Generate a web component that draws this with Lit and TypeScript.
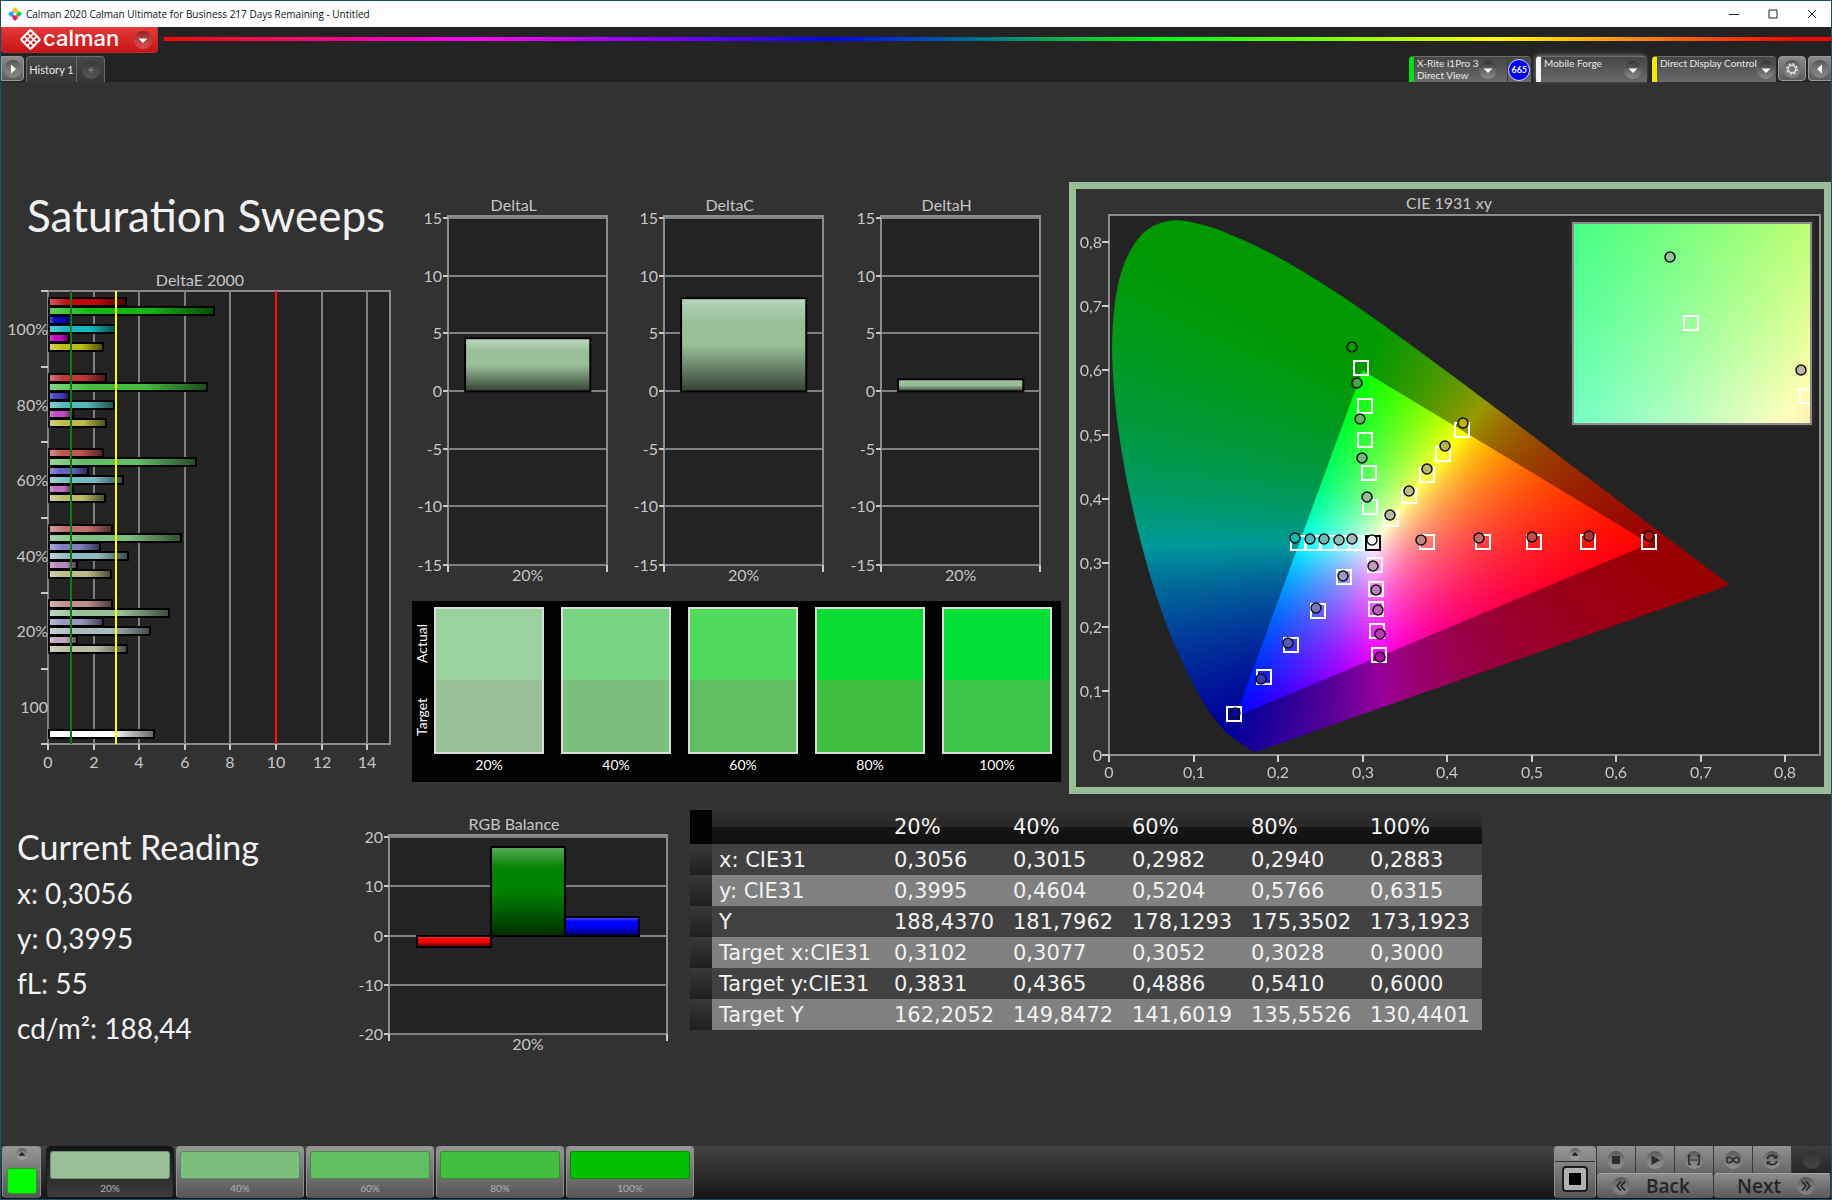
import { LitElement, html, svg, css } from "lit";
import { customElement, property } from "lit/decorators.js";

type Point = [number, number];

const chartText = css`
  :host {
    display: block;
  }
  svg {
    display: block;
    width: 100%;
    height: auto;
  }
  text {
    font-family: Lato, "Open Sans", sans-serif;
    font-size: 16px;
    fill: #c6c6c6;
  }
  .mid {
    text-anchor: middle;
  }
  .end {
    text-anchor: end;
  }
  .plot {
    fill: #232323;
    stroke: #8c8c8c;
    stroke-width: 2;
    shape-rendering: crispEdges;
  }
  .grid {
    stroke: #808080;
    stroke-width: 2;
    shape-rendering: crispEdges;
  }
  .tick {
    stroke: #c8c8c8;
    stroke-width: 2;
    shape-rendering: crispEdges;
  }
`;

/* ---------- vertical bar chart (DeltaL, DeltaC, DeltaH, RGB Balance) ---------- */

interface Bar {
  value: number;
  color: string;
}

@customElement("value-chart")
export class ValueChart extends LitElement {
  @property() heading = "";
  @property({ attribute: false }) bars: Bar[] = [];
  @property({ type: Number }) limit = 15;
  @property({ type: Number }) step = 5;
  @property({ type: Number }) boxWidth = 216;
  @property({ type: Number }) boxHeight = 418;
  @property({ type: Number }) plotLeft = 36;
  @property({ type: Number }) plotWidth = 159;
  @property({ type: Number }) plotHeight = 346;
  @property({ type: Number }) inset = 17;

  static styles = [
    chartText,
    css`
      .bar {
        stroke: #000;
        stroke-width: 2;
      }
    `,
  ];

  render() {
    const top = 36;
    const left = this.plotLeft;
    const right = left + this.plotWidth;
    const bottom = top + this.plotHeight;
    const y = (v: number) => Math.round(top + ((this.limit - v) / (2 * this.limit)) * this.plotHeight);
    const levels: number[] = [];
    for (let v = this.limit; v >= -this.limit; v -= this.step) levels.push(v);
    const barWidth = (this.plotWidth - 2 * this.inset) / this.bars.length;
    return html`
      <svg viewBox="0 0 ${this.boxWidth} ${this.boxHeight}" role="img" aria-label=${this.heading}>
        <defs>
          <linearGradient id="shade" x1="0" y1="0" x2="0" y2="1">
            <stop offset="0" stop-color="#fff" stop-opacity="0.35" />
            <stop offset="0.25" stop-color="#fff" stop-opacity="0" />
            <stop offset="0.5" stop-color="#000" stop-opacity="0" />
            <stop offset="1" stop-color="#000" stop-opacity="0.65" />
          </linearGradient>
        </defs>
        <text class="mid" x=${left + this.plotWidth / 2 - 14} y="29">${this.heading}</text>
        <rect class="plot" x=${left} y=${top - 2} width=${this.plotWidth} height=${this.plotHeight + 2} />
        ${levels.map(
          (v) => svg`
            <line class="grid" x1=${left} x2=${right} y1=${y(v)} y2=${y(v)} />
            <line class="tick" x1=${left - 5} x2=${left} y1=${y(v)} y2=${y(v)} />
            <text class="end" x=${left - 6} y=${y(v) + 6}>${v}</text>`
        )}
        <line class="tick" x1=${left} x2=${left} y1=${bottom} y2=${bottom + 7} />
        <line class="tick" x1=${right} x2=${right} y1=${bottom} y2=${bottom + 7} />
        ${this.bars.map((b, i) => {
          const x = left + this.inset + i * barWidth;
          const y0 = Math.min(y(0), y(b.value));
          const h = Math.abs(y(0) - y(b.value));
          return svg`
            <rect x=${x} y=${y0} width=${barWidth} height=${h} fill=${b.color} />
            <rect class="bar" x=${x} y=${y0} width=${barWidth} height=${h} fill="url(#shade)" />`;
        })}
        <text class="mid" x=${left + this.plotWidth / 2} y=${bottom + 16}>20%</text>
      </svg>
    `;
  }
}

/* ---------- horizontal bar chart (DeltaE 2000) ---------- */

const SWEEPS: { label: string; values: number[]; colors: string[] }[] = [
  {
    label: "100%",
    values: [3.4, 7.3, 1.0, 3.0, 0.9, 2.43],
    colors: ["#c00808", "#10b810", "#0a0ac0", "#10b8c0", "#c008c0", "#bcbc10"],
  },
  {
    label: "80%",
    values: [2.55, 6.96, 0.9, 2.9, 1.08, 2.55],
    colors: ["#c03838", "#44bc40", "#4444c0", "#50b8b8", "#c04cc0", "#bcbc44"],
  },
  {
    label: "60%",
    values: [2.43, 6.49, 1.74, 3.3, 1.08, 2.5],
    colors: ["#c05454", "#60bf60", "#6464c0", "#74bcc0", "#c070c0", "#bcbc68"],
  },
  {
    label: "40%",
    values: [2.8, 5.85, 2.27, 3.5, 1.29, 2.75],
    colors: ["#c07070", "#7cc07e", "#8080c0", "#90bcc0", "#c088c0", "#bcbc88"],
  },
  {
    label: "20%",
    values: [2.8, 5.3, 2.43, 4.47, 1.29, 3.48],
    colors: ["#c09090", "#99bf99", "#9898c0", "#a8bcc0", "#c0a4c0", "#bcbca0"],
  },
  { label: "100", values: [0, 0, 0, 0, 0, 0, 4.65], colors: ["", "", "", "", "", "", "#ffffff"] },
];

@customElement("sweep-chart")
export class SweepChart extends LitElement {
  static styles = [
    chartText,
    css`
      .bar {
        stroke: #000;
        stroke-width: 2;
      }
      .limit {
        stroke-width: 2;
        shape-rendering: crispEdges;
      }
      .good {
        stroke: #0c7a0c;
      }
      .fair {
        stroke: #ffff00;
      }
      .poor {
        stroke: #ff1010;
      }
    `,
  ];

  render() {
    const left = 47;
    const top = 29;
    const width = 342;
    const height = 453;
    const bottom = top + height;
    const x = (v: number) => Math.round(left + (v * width) / 15);
    const band = height / SWEEPS.length;
    const pitch = 9;
    const vline = (v: number, cls: string) =>
      svg`<line class="limit ${cls}" x1=${x(v)} x2=${x(v)} y1=${top} y2=${bottom} />`;
    return html`
      <svg viewBox="0 0 411 518" role="img" aria-label="DeltaE 2000">
        <defs>
          <linearGradient id="shade">
            <stop offset="0" stop-color="#fff" stop-opacity="0.35" />
            <stop offset="0.25" stop-color="#fff" stop-opacity="0" />
            <stop offset="0.6" stop-color="#000" stop-opacity="0" />
            <stop offset="1" stop-color="#000" stop-opacity="0.6" />
          </linearGradient>
        </defs>
        <text class="mid" x="199" y="24">DeltaE 2000</text>
        <rect class="plot" x=${left} y=${top} width=${width} height=${height} />
        ${[0, 2, 4, 6, 8, 10, 12, 14].map(
          (v) => svg`
            <line class="grid" x1=${x(v)} x2=${x(v)} y1=${top} y2=${bottom} />
            <line class="tick" x1=${x(v)} x2=${x(v)} y1=${bottom} y2=${bottom + 6} />
            <text class="mid" x=${x(v)} y=${bottom + 24}>${v}</text>`
        )}
        ${[0, 1, 2, 3, 4, 5, 6].map((i) => {
          const y = Math.round(top + i * band);
          return svg`<line class="tick" x1=${left - 7} x2=${left} y1=${y} y2=${y} />`;
        })}
        ${SWEEPS.map((s, i) => {
          const y = Math.round(top + i * band);
          return svg`
            <text class="end" x=${left} y=${y + 44}>${s.label}</text>
            ${s.values.map((v, k) =>
              v
                ? svg`
                    <rect x=${left + 1} y=${y + 7 + k * pitch} width=${x(v) - left - 1} height="8" fill=${s.colors[k]} />
                    <rect class="bar" x=${left + 1} y=${y + 7 + k * pitch} width=${x(v) - left - 1} height="8"
                      fill="url(#shade)" />`
                : null
            )}`;
        })}
        ${vline(1, "good")} ${vline(3, "fair")} ${vline(10, "poor")}
      </svg>
    `;
  }
}

/* ---------- CIE 1931 chromaticity diagram ---------- */

const LOCUS: Point[] = [
  [0.1741, 0.005], [0.1726, 0.0048], [0.1689, 0.0069], [0.1644, 0.0109], [0.1566, 0.0177],
  [0.144, 0.0297], [0.1355, 0.0399], [0.1241, 0.0578], [0.1096, 0.0868], [0.0913, 0.1327],
  [0.0687, 0.2007], [0.0454, 0.295], [0.0235, 0.4127], [0.0082, 0.5384], [0.0039, 0.6548],
  [0.0139, 0.7502], [0.0389, 0.812], [0.0743, 0.8338], [0.1142, 0.8262], [0.1547, 0.8059],
  [0.1929, 0.7816], [0.2296, 0.7543], [0.2658, 0.7243], [0.3016, 0.6923], [0.3373, 0.6589],
  [0.3731, 0.6245], [0.4087, 0.5896], [0.4441, 0.5547], [0.4788, 0.5202], [0.5125, 0.4866],
  [0.5448, 0.4544], [0.5752, 0.4242], [0.627, 0.3725], [0.6658, 0.334], [0.6915, 0.3083],
  [0.719, 0.2809], [0.7347, 0.2653],
];

const PRIMARIES: Point[] = [[0.64, 0.33], [0.3, 0.6], [0.15, 0.06]];

const PLOT_W = 711;
const PLOT_H = 540;
const UNIT_X = 845;
const UNIT_Y = 641;

/* Marker centres in plot pixels. */
const TARGETS: Point[] = [
  [252, 153], [256, 191], [256, 225], [260, 258], [261, 292],
  [353, 215], [334, 239], [318, 260], [300, 281], [282, 304],
  [189, 328], [204, 328], [219, 328], [234, 328], [248, 328],
  [318, 327], [374, 327], [425, 327], [479, 327], [540, 327],
  [235, 362], [209, 396], [182, 430], [155, 462], [125, 499],
  [266, 350], [267, 374], [267, 394], [268, 416], [270, 440],
];

const READINGS: [number, number, string][] = [
  [243, 132, "none"], [248, 168, "#44a844"], [251, 204, "#60b460"], [253, 243, "#70b878"], [258, 282, "#90bc94"],
  [354, 208, "#c0b400"], [336, 231, "#bcb444"], [318, 254, "#bcb868"], [300, 276, "#bcb888"], [281, 300, "#bcb8a0"],
  [186, 323, "#10b8b8"], [201, 324, "#50b8b8"], [215, 324, "#70b8b8"], [230, 325, "#90bcbc"], [243, 324, "#a8bcbc"],
  [312, 325, "#c08888"], [370, 323, "#c06868"], [423, 322, "#c04c4c"], [480, 321, "#b83030"], [540, 321, "#b81010"],
  [234, 361, "#9898c0"], [207, 393, "#7878b8"], [179, 428, "#5858b8"], [152, 464, "#3838b0"], [126, 498, "#0808a8"],
  [264, 351, "#b8a0b8"], [267, 375, "#b880b8"], [269, 395, "#b860b8"], [271, 419, "#b838b8"], [271, 442, "#b000b0"],
];

/* Linear RGB for a chromaticity, scaled so that the strongest channel is 1. */
function chromaToRgb(x: number, y: number): [number, number, number] {
  const X = x / y;
  const Z = (1 - x - y) / y;
  const r = Math.max(0, 3.2406 * X - 1.5372 - 0.4986 * Z);
  const g = Math.max(0, -0.9689 * X + 1.8758 + 0.0415 * Z);
  const b = Math.max(0, 0.0557 * X - 0.204 + 1.057 * Z);
  const m = Math.max(r, g, b, 1e-6);
  return [r / m, g / m, b / m];
}

function chromaField(w: number, h: number, toXy: (px: number, py: number) => Point, gain: number) {
  const canvas = document.createElement("canvas");
  canvas.width = w;
  canvas.height = h;
  const ctx = canvas.getContext("2d")!;
  const data = ctx.createImageData(w, h);
  for (let py = 0; py < h; py++) {
    for (let px = 0; px < w; px++) {
      const [x, y] = toXy(px, py);
      const rgb = chromaToRgb(x, Math.max(y, 0.001));
      const o = (py * w + px) * 4;
      for (let c = 0; c < 3; c++) data.data[o + c] = 255 * gain * rgb[c];
      data.data[o + 3] = 255;
    }
  }
  ctx.putImageData(data, 0, 0);
  return canvas;
}

@customElement("cie-chart")
export class CieChart extends LitElement {
  static styles = [
    chartText,
    css`
      canvas {
        display: block;
      }
      .target {
        fill: none;
        stroke: #fff;
        stroke-width: 2;
        shape-rendering: crispEdges;
      }
      .white-target {
        stroke: #000;
      }
      .reading {
        stroke: #111;
        stroke-width: 1.5;
      }
      .frame {
        fill: none;
        stroke: #8c8c8c;
        stroke-width: 2;
        shape-rendering: crispEdges;
      }
      .halo {
        fill: #2b2b2b;
      }
    `,
  ];

  firstUpdated() {
    const plot = this.renderRoot.querySelector<HTMLCanvasElement>("#diagram")!;
    const ctx = plot.getContext("2d")!;
    const place = ([x, y]: Point): Point => [x * UNIT_X, PLOT_H - y * UNIT_Y];
    const toXy = (px: number, py: number): Point => [(px + 0.5) / UNIT_X, (PLOT_H - py - 0.5) / UNIT_Y];

    const pts = LOCUS.map(place);
    ctx.save();
    ctx.beginPath();
    ctx.moveTo(...pts[0]);
    for (let i = 0; i < pts.length - 1; i++) {
      const a = pts[Math.max(i - 1, 0)];
      const b = pts[i];
      const c = pts[i + 1];
      const d = pts[Math.min(i + 2, pts.length - 1)];
      ctx.bezierCurveTo(
        b[0] + (c[0] - a[0]) / 6, b[1] + (c[1] - a[1]) / 6,
        c[0] - (d[0] - b[0]) / 6, c[1] - (d[1] - b[1]) / 6,
        c[0], c[1]
      );
    }
    ctx.closePath();
    ctx.clip();
    ctx.drawImage(chromaField(PLOT_W, PLOT_H, toXy, 0.6), 0, 0);
    ctx.restore();

    ctx.save();
    ctx.beginPath();
    PRIMARIES.map(place).forEach((p) => ctx.lineTo(...p));
    ctx.closePath();
    ctx.clip();
    ctx.drawImage(chromaField(PLOT_W, PLOT_H, toXy, 1), 0, 0);
    ctx.restore();

    const detail = this.renderRoot.querySelector<HTMLCanvasElement>("#detail")!;
    const w = detail.width;
    const h = detail.height;
    detail
      .getContext("2d")!
      .drawImage(
        chromaField(w, h, (px, py) => [0.3102 + (px - w / 2) / 4500, 0.3831 - (py - h / 2) / 3994], 1),
        0,
        0
      );
  }

  private target([x, y]: Point, cls = "") {
    return svg`<rect class="target ${cls}" x=${x - 7} y=${y - 7} width="14" height="14" />`;
  }

  private reading(x: number, y: number, fill: string) {
    return svg`<circle class="reading" cx=${x} cy=${y} r="5" fill=${fill} />`;
  }

  render() {
    const ticks = [0, 1, 2, 3, 4, 5, 6, 7, 8];
    const name = (t: number) => (t ? `0,${t}` : "0");
    return html`
      <svg viewBox="0 0 748 598" role="img" aria-label="CIE 1931 xy">
        <defs>
          <clipPath id="detail-area"><rect x="0" y="0" width="238" height="201" /></clipPath>
        </defs>
        <text class="mid" x="373" y="20">CIE 1931 xy</text>
        <g transform="translate(33 26)">
          <rect class="plot" x="0" y="0" width=${PLOT_W} height=${PLOT_H} />
          <foreignObject x="0" y="0" width=${PLOT_W} height=${PLOT_H}>
            <canvas id="diagram" width=${PLOT_W} height=${PLOT_H}></canvas>
          </foreignObject>
          <rect class="frame" x="0" y="0" width=${PLOT_W} height=${PLOT_H} />
          ${ticks.map((t) => {
            const x = Math.round((t * UNIT_X) / 10);
            const y = Math.round(PLOT_H - (t * UNIT_Y) / 10);
            return svg`
              <line class="tick" x1=${x} x2=${x} y1=${PLOT_H} y2=${PLOT_H + 7} />
              <text class="mid" x=${x} y=${PLOT_H + 23}>${name(t)}</text>
              <line class="tick" x1="-7" x2="0" y1=${y} y2=${y} />
              <text class="end" x="-7" y=${y + 6}>${name(t)}</text>`;
          })}
          ${TARGETS.map((p) => this.target(p))} ${this.target([264, 328], "white-target")}
          ${READINGS.map((r) => this.reading(...r))} ${this.reading(263, 325, "#ffffff")}
          <rect class="halo" x="460" y="4" width="246" height="208" />
          <foreignObject x="464" y="8" width="238" height="201">
            <canvas id="detail" width="238" height="201"></canvas>
          </foreignObject>
          <g transform="translate(464 8)">
            <g clip-path="url(#detail-area)">
              ${this.target([118, 100])} ${this.target([234, 173])}
              ${this.reading(97, 34, "#98c49c")} ${this.reading(228, 147, "#bcb8a0")}
            </g>
          </g>
          <rect class="frame" x="464" y="8" width="238" height="201" />
        </g>
      </svg>
    `;
  }
}

/* ---------- application window ---------- */

const SWATCHES = [
  { label: "20%", actual: "#99d19f", target: "#99bf99", pattern: "#99bf99" },
  { label: "40%", actual: "#78d57f", target: "#7cc07e", pattern: "#7cc07e" },
  { label: "60%", actual: "#50da5b", target: "#60bf60", pattern: "#60bf60" },
  { label: "80%", actual: "#08dc32", target: "#42bf40", pattern: "#42bf40" },
  { label: "100%", actual: "#00df33", target: "#3fc44a", pattern: "#00c000" },
];

const TABLE: [string, string[]][] = [
  ["x: CIE31", ["0,3056", "0,3015", "0,2982", "0,2940", "0,2883"]],
  ["y: CIE31", ["0,3995", "0,4604", "0,5204", "0,5766", "0,6315"]],
  ["Y", ["188,4370", "181,7962", "178,1293", "175,3502", "173,1923"]],
  ["Target x:CIE31", ["0,3102", "0,3077", "0,3052", "0,3028", "0,3000"]],
  ["Target y:CIE31", ["0,3831", "0,4365", "0,4886", "0,5410", "0,6000"]],
  ["Target Y", ["162,2052", "149,8472", "141,6019", "135,5526", "130,4401"]],
];

const knob = (shape: unknown, cls = "") => html`
  <svg class="knob ${cls}" viewBox="0 0 18 18" aria-hidden="true">
    <defs>
      <linearGradient id="dish" x1="0" y1="0" x2="0" y2="1">
        <stop offset="0" stop-color="#000" stop-opacity="0.38" />
        <stop offset="1" stop-color="#fff" stop-opacity="0.22" />
      </linearGradient>
    </defs>
    <circle cx="9" cy="9" r="9" fill="url(#dish)" />
    ${shape}
  </svg>
`;

const downArrow = svg`<path d="M4.5 7.5h9L9 12z" fill="#fff" />`;

const TRANSPORT: { name: string; shape: unknown }[] = [
  { name: "Stop", shape: svg`<path d="M5 5h8v8H5z" fill="#2c2c2c" />` },
  { name: "Play", shape: svg`<path d="M5.5 4.5v9.5l8.5-4.7z" fill="#2c2c2c" />` },
  {
    name: "Read series",
    shape: svg`<path d="M6 4.5H4v9h2M12 4.5h2v9h-2" fill="none" stroke="#2c2c2c" stroke-width="1.6" />
      <path d="M6 8.2h1.6v1.6H6zM8.3 8.2h1.4v1.6H8.3zM10.4 8.2H12v1.6h-1.6z" fill="#2c2c2c" />`,
  },
  {
    name: "Read continuously",
    shape: svg`<path d="M9 9C7.6 6.9 6.6 6.3 5.4 6.3a2.7 2.7 0 0 0 0 5.4C6.6 11.7 7.6 11.1 9 9s2.4-2.7 3.6-2.7a2.7 2.7 0 0 1 0 5.4C11.4 11.7 10.4 11.1 9 9z"
      fill="none" stroke="#2c2c2c" stroke-width="1.6" />`,
  },
  {
    name: "Refresh",
    shape: svg`<path d="M4.3 8.2A4.8 4.8 0 0 1 12.5 5.8M13.7 9.8A4.8 4.8 0 0 1 5.5 12.2" fill="none"
      stroke="#2c2c2c" stroke-width="1.8" />
      <path d="M14.3 3.5v4.3H10zM3.7 14.5v-4.3H8z" fill="#2c2c2c" />`,
  },
];

@customElement("app-root")
export class AppRoot extends LitElement {
  static styles = css`
    :host {
      display: flex;
      flex-direction: column;
      box-sizing: border-box;
      min-height: 100vh;
      border: 1px solid #1d5068;
      background: #323232;
      color: #f2f2f2;
      font-family: Lato, "Open Sans", sans-serif;
    }
    * {
      box-sizing: border-box;
    }
    button {
      margin: 0;
      padding: 0;
      border: 0;
      background: none;
      color: inherit;
      font: inherit;
      display: flex;
      align-items: center;
      justify-content: center;
    }
    h1,
    h2,
    p {
      margin: 0;
      font-weight: 400;
    }
    .knob {
      display: block;
      width: 18px;
      height: 18px;
      flex: none;
    }

    .titlebar {
      display: flex;
      align-items: center;
      height: 26px;
      padding-left: 7px;
      background: #fff;
      color: #111;
      font-family: "Open Sans", sans-serif;
      font-size: 10px;
      line-height: 24px;
    }
    .titlebar .mark {
      width: 14px;
      height: 14px;
      margin-right: 4px;
    }
    .titlebar .name {
      flex: 1;
    }
    .titlebar button {
      width: 39px;
      height: 26px;
    }
    .titlebar button svg {
      width: 10px;
      height: 10px;
      fill: none;
      stroke: #222;
    }

    .brandbar {
      display: flex;
      align-items: flex-start;
      gap: 6px;
      height: 29px;
      background: #232323;
    }
    .brand {
      width: 157px;
      height: 26px;
      gap: 2px;
      padding-left: 18px;
      justify-content: flex-start;
      border: 1px solid #a33;
      border-top: 0;
      border-radius: 0 0 4px 4px;
      background: linear-gradient(#e63a3a, #c81414);
      color: #fff;
      font-family: Inter, sans-serif;
      font-size: 22px;
      font-weight: 500;
      line-height: 20px;
    }
    .brand .mark {
      width: 21px;
      height: 21px;
      flex: none;
    }
    .brand .word {
      flex: 1;
      text-align: left;
      padding-bottom: 4px;
    }
    .brand .knob {
      margin-right: 5px;
    }
    .rainbow {
      flex: 1;
      height: 4px;
      margin-top: 10px;
      background: linear-gradient(90deg, #f00, #f0f 19%, #00f 40%, #0f0 60%, #ff0 80%, #f00 98%);
    }

    .tabbar {
      display: flex;
      height: 26px;
      background: #232323;
      font-size: 11px;
      line-height: 12px;
      color: #e8e8e8;
    }
    .edge {
      width: 23px;
      height: 25px;
      border: 1px solid #9a9a9a;
      border-radius: 0 4px 4px 0;
      background: linear-gradient(#8a8a8a, #5c5c5c);
    }
    .edge.right {
      border-radius: 4px 0 0 4px;
      border-right: 0;
    }
    .history {
      display: flex;
      margin-left: 2px;
      border: 1px solid #6a6a6a;
      border-bottom: 0;
      border-radius: 4px 4px 0 0;
      background: linear-gradient(#484848, #353535);
    }
    .history .tab {
      width: 49px;
      white-space: nowrap;
    }
    .history .add {
      width: 28px;
      border-left: 1px solid #6a6a6a;
    }
    .history .knob {
      opacity: 0.6;
    }
    .devices {
      display: flex;
      flex: 1;
      justify-content: flex-end;
      gap: 5px;
      margin-right: 2px;
    }
    .device {
      display: flex;
      border-radius: 4px 4px 0 0;
      border-top: 1px solid #6e6e6e;
      border-left: 5px solid #888;
      background: linear-gradient(#464646, #6a6a6a);
      font-size: 10px;
    }
    .device .pick {
      flex: 1;
      align-items: flex-start;
      justify-content: space-between;
      padding: 0 5px 0 3px;
      text-align: left;
      white-space: nowrap;
    }
    .device .knob {
      margin-top: 4px;
    }
    .meter {
      width: 122px;
      border-left-color: #00e010;
    }
    .meter .pick {
      padding-right: 10px;
    }
    .source {
      width: 111px;
      border-left-color: #f4f4f4;
      box-shadow: -1px -1px 4px #777;
    }
    .display {
      width: 124px;
      border-left-color: #f0e800;
    }
    .badge {
      display: flex;
      align-items: center;
      justify-content: center;
      width: 29px;
      border-left: 1px solid #3a3a3a;
    }
    .badge span {
      width: 22px;
      height: 22px;
      border: 1px solid #cfd4ff;
      border-radius: 50%;
      background: #0000f0;
      color: #fff;
      font-size: 9px;
      font-weight: 700;
      line-height: 20px;
      text-align: center;
    }
    .gear {
      width: 28px;
      height: 25px;
      margin-right: 2px;
      border: 1px solid #9a9a9a;
      border-radius: 4px;
      background: linear-gradient(#8a8a8a, #5c5c5c);
    }

    main {
      flex: 1;
      padding-top: 100px;
      padding-bottom: 80px;
    }
    .upper {
      display: grid;
      grid-template-columns: 411fr 657fr 762fr;
      align-items: start;
    }
    h1 {
      height: 80px;
      padding-left: 26px;
      font-size: 44px;
      line-height: 66px;
      white-space: nowrap;
    }
    .deltas {
      display: grid;
      grid-template-columns: repeat(3, 1fr);
      margin-right: 8px;
    }
    .compare {
      display: grid;
      grid-template-columns: 18px 1fr;
      margin-right: 8px;
      padding: 6px 9px 8px 4px;
      background: #000;
      color: #fff;
      font-size: 14px;
      line-height: 18px;
    }
    .sides {
      display: flex;
      flex-direction: column;
      align-items: flex-start;
      height: 146px;
    }
    .sides span {
      flex: 1;
      writing-mode: vertical-rl;
      transform: rotate(180deg);
      text-align: center;
      line-height: 12px;
    }
    .pairs {
      display: grid;
      grid-template-columns: repeat(5, 1fr);
      column-gap: 17px;
      text-align: center;
    }
    .chips {
      display: flex;
      flex-direction: column;
      height: 147px;
      margin-bottom: 2px;
      border: 2px solid #dcdcdc;
    }
    .chips div {
      flex: 1;
    }
    .cie {
      border: 7px solid #99bf99;
    }

    .lower {
      display: grid;
      grid-template-columns: 350fr 339fr 792fr 349fr;
      align-items: start;
    }
    .current {
      padding: 30px 0 0 16px;
    }
    .current h2 {
      font-size: 34px;
      line-height: 46px;
      white-space: nowrap;
    }
    .current p {
      padding-top: 2px;
      font-size: 28px;
      line-height: 43px;
      white-space: nowrap;
    }
    .balance {
      padding-top: 7px;
    }
    table {
      width: 100%;
      margin-top: 16px;
      border-collapse: collapse;
      table-layout: fixed;
      font-family: "DejaVu Sans", "Open Sans", sans-serif;
      font-size: 21px;
      text-align: left;
      white-space: nowrap;
    }
    th,
    td {
      height: 31px;
      padding: 0 0 0 7px;
      font-weight: 400;
      line-height: 30px;
    }
    thead th {
      height: 34px;
      background: linear-gradient(#303030, #282828 50%, #161616 50%, #101010);
    }
    .stub {
      width: 22px;
      background: linear-gradient(#383838, #1f1f1f);
    }
    thead .stub {
      background: #000;
    }
    .label {
      width: 175px;
    }
    tbody tr {
      background: #424242;
    }
    tbody tr:nth-child(even) {
      background: #808080;
    }

    .toolbar {
      display: flex;
      height: 53px;
      padding: 0 0 1px 1px;
      background: linear-gradient(#444, #141414);
    }
    .raised {
      border: 1px solid #8e8e8e;
      border-bottom-color: #555;
      border-radius: 4px;
      background: linear-gradient(#969696, #565656);
    }
    .status {
      width: 39px;
      flex-direction: column;
      justify-content: space-between;
      margin-right: 5px;
      padding: 1px 4px 3px;
    }
    .status .lamp {
      width: 30px;
      height: 26px;
      border: 1px solid #2a9a2a;
      border-radius: 3px;
      background: #00ff00;
    }
    .small {
      width: 12px;
      height: 12px;
    }
    .patterns {
      display: flex;
      gap: 2px;
      flex: 1;
    }
    .pattern {
      width: 128px;
      flex-direction: column;
      justify-content: flex-start;
      padding: 4px 3px 0;
      color: #b0b0b0;
      font-size: 10px;
      line-height: 18px;
    }
    .pattern .chip {
      width: 100%;
      height: 31px;
      border: 1px solid rgba(0, 0, 0, 0.25);
      border-radius: 3px;
    }
    .pattern.on {
      border-color: #161616;
      background: linear-gradient(#161616, #3c3c3c);
    }
    .window {
      display: flex;
      flex-direction: column;
      width: 42px;
      margin-right: 1px;
      padding-bottom: 1px;
    }
    .window .up {
      height: 15px;
      border-bottom: 1px solid #333;
      width: 100%;
    }
    .window .full {
      flex: 1;
      width: 100%;
    }
    .window .full svg {
      width: 28px;
      height: 28px;
    }
    .controls {
      display: flex;
      flex-direction: column;
      width: 234px;
    }
    .transport {
      display: grid;
      grid-template-columns: repeat(6, 1fr);
      height: 27px;
    }
    .transport button {
      border-right: 1px solid #3a3a3a;
      background: linear-gradient(#929292, #666);
    }
    .transport .idle {
      border: 0;
      background: linear-gradient(#3e3e3e, #262626);
    }
    .transport .idle .knob {
      opacity: 0.5;
    }
    .steps {
      display: grid;
      grid-template-columns: 1fr 1fr;
      flex: 1;
    }
    .steps button {
      gap: 16px;
      border-top: 1px solid #a4a4a4;
      border-right: 1px solid #3a3a3a;
      border-radius: 3px;
      background: linear-gradient(#8c8c8c, #585858);
      color: #242424;
      font-family: "Open Sans", sans-serif;
      font-size: 19px;
      font-weight: 600;
      line-height: 24px;
    }
    .steps .back {
      padding-right: 8px;
    }
    .steps .next {
      padding-left: 8px;
    }
  `;

  private brandMark() {
    return html`
      <svg class="mark" viewBox="0 0 20 20" aria-hidden="true">
        <g transform="rotate(45 10 10)" fill="none" stroke="#fff">
          <rect x="3.5" y="3.5" width="13" height="13" rx="1.5" stroke-width="2" />
          <path d="M7.9 4v12M12.1 4v12M4 7.9h12M4 12.1h12" stroke-width="1.5" />
        </g>
      </svg>
    `;
  }

  private titleMark() {
    const tiles: [number, number, number, string][] = [
      [7, 3, 3, "#ffc800"], [3, 7, 3, "#18b4f0"], [11, 7, 3, "#10c850"], [7, 11, 3, "#f01860"],
      [5, 5, 1.6, "#58c8f0"], [9, 5, 1.6, "#b0d820"], [5, 9, 1.6, "#a040c0"], [9, 9, 1.6, "#e85030"],
    ];
    return html`
      <svg class="mark" viewBox="0 0 14 14" aria-hidden="true">
        ${tiles.map(
          ([x, y, s, c]) => svg`<path d="M${x} ${y - s}l${s} ${s}l${-s} ${s}l${-s} ${-s}z" fill=${c} />`
        )}
      </svg>
    `;
  }

  render() {
    const up = knob(svg`<path d="M4 11.5h10L9 6z" fill="#222" />`, "small");
    return html`
      <header>
        <div class="titlebar">
          ${this.titleMark()}
          <span class="name">Calman 2020 Calman Ultimate for Business 217 Days Remaining - Untitled</span>
          <button aria-label="Minimize"><svg viewBox="0 0 10 10"><path d="M0 5.5h10" /></svg></button>
          <button aria-label="Maximize"><svg viewBox="0 0 10 10"><path d="M1 1h8v8H1z" /></svg></button>
          <button aria-label="Close"><svg viewBox="0 0 10 10"><path d="M1 1l8 8M9 1L1 9" /></svg></button>
        </div>
        <div class="brandbar">
          <button class="brand">${this.brandMark()}<span class="word">calman</span>${knob(downArrow)}</button>
          <div class="rainbow"></div>
        </div>
        <nav class="tabbar">
          <button class="edge" aria-label="Expand left panel">
            ${knob(svg`<path d="M7 4.5v9l5-4.5z" fill="#fff" />`)}
          </button>
          <div class="history">
            <button class="tab">History 1</button>
            <button class="add" aria-label="Add tab">
              ${knob(svg`<path d="M9 6v6M6 9h6" stroke="#bbb" stroke-width="1" />`)}
            </button>
          </div>
          <div class="devices">
            <div class="device meter">
              <button class="pick"><span>X-Rite i1Pro 3<br />Direct View</span>${knob(downArrow)}</button>
              <div class="badge"><span>665</span></div>
            </div>
            <div class="device source">
              <button class="pick"><span>Mobile Forge</span>${knob(downArrow)}</button>
            </div>
            <div class="device display">
              <button class="pick"><span>Direct Display Control</span>${knob(downArrow)}</button>
            </div>
          </div>
          <button class="gear" aria-label="Settings">
            ${knob(svg`
              <circle cx="9" cy="9" r="3.8" fill="none" stroke="#ddd" stroke-width="1.5" />
              <circle cx="9" cy="9" r="5.2" fill="none" stroke="#ddd" stroke-width="1.6"
                stroke-dasharray="2 2.084" />`)}
          </button>
          <button class="edge right" aria-label="Expand right panel">
            ${knob(svg`<path d="M11 4.5v9L6 9z" fill="#fff" />`)}
          </button>
        </nav>
      </header>

      <main>
        <section class="upper">
          <div>
            <h1>Saturation Sweeps</h1>
            <sweep-chart></sweep-chart>
          </div>
          <div>
            <div class="deltas">
              <value-chart heading="DeltaL" .bars=${[{ value: 4.6, color: "#99bf99" }]}></value-chart>
              <value-chart heading="DeltaC" .bars=${[{ value: 8.1, color: "#99bf99" }]}></value-chart>
              <value-chart heading="DeltaH" .bars=${[{ value: 1, color: "#99bf99" }]}></value-chart>
            </div>
            <div class="compare">
              <div class="sides"><span>Actual</span><span>Target</span></div>
              <div class="pairs">
                ${SWATCHES.map(
                  (s) => html`
                    <div>
                      <div class="chips">
                        <div style="background:${s.actual}"></div>
                        <div style="background:${s.target}"></div>
                      </div>
                      ${s.label}
                    </div>
                  `
                )}
              </div>
            </div>
          </div>
          <cie-chart class="cie"></cie-chart>
        </section>

        <section class="lower">
          <div class="current">
            <h2>Current Reading</h2>
            <p>x: 0,3056</p>
            <p>y: 0,3995</p>
            <p>fL: 55</p>
            <p>cd/m²: 188,44</p>
          </div>
          <value-chart
            class="balance"
            heading="RGB Balance"
            .bars=${[
              { value: -2.4, color: "#ff0000" },
              { value: 18, color: "#008000" },
              { value: 3.7, color: "#0000ff" },
            ]}
            .limit=${20}
            .step=${10}
            .boxWidth=${339}
            .boxHeight=${262}
            .plotLeft=${38}
            .plotWidth=${278}
            .plotHeight=${197}
            .inset=${28}
          ></value-chart>
          <table>
            <thead>
              <tr>
                <th class="stub"></th>
                <th class="label"></th>
                ${SWATCHES.map((s) => html`<th scope="col">${s.label}</th>`)}
              </tr>
            </thead>
            <tbody>
              ${TABLE.map(
                ([label, cells]) => html`
                  <tr>
                    <td class="stub"></td>
                    <th scope="row">${label}</th>
                    ${cells.map((c) => html`<td>${c}</td>`)}
                  </tr>
                `
              )}
            </tbody>
          </table>
        </section>
      </main>

      <footer class="toolbar">
        <button class="status raised" aria-label="Pattern window">${up}<span class="lamp"></span></button>
        <div class="patterns">
          ${SWATCHES.map(
            (s, i) => html`
              <button class="pattern raised ${i === 0 ? "on" : ""}">
                <span class="chip" style="background:${s.pattern}"></span>${s.label}
              </button>
            `
          )}
        </div>
        <div class="window raised">
          <button class="up" aria-label="Show options">${up}</button>
          <button class="full" aria-label="Full field">
            <svg viewBox="0 0 28 28">
              <rect x="2" y="2" width="24" height="24" rx="3" fill="#b0b0b0" stroke="#1c1c1c" stroke-width="2" />
              <path d="M8 8h12v12H8z" fill="#000" />
            </svg>
          </button>
        </div>
        <div class="controls">
          <div class="transport">
            ${TRANSPORT.map((t) => html`<button aria-label=${t.name}>${knob(t.shape)}</button>`)}
            <button class="idle" aria-label="Idle">${knob(null)}</button>
          </div>
          <div class="steps">
            <button class="back">
              ${knob(svg`<path d="M9 4.5L5 9l4 4.5M13 4.5L9 9l4 4.5" fill="none" stroke="#222" stroke-width="1.5" />`)}
              Back
            </button>
            <button class="next">
              Next
              ${knob(svg`<path d="M5 4.5L9 9l-4 4.5M9 4.5L13 9l-4 4.5" fill="none" stroke="#222" stroke-width="1.5" />`)}
            </button>
          </div>
        </div>
      </footer>
    `;
  }
}
